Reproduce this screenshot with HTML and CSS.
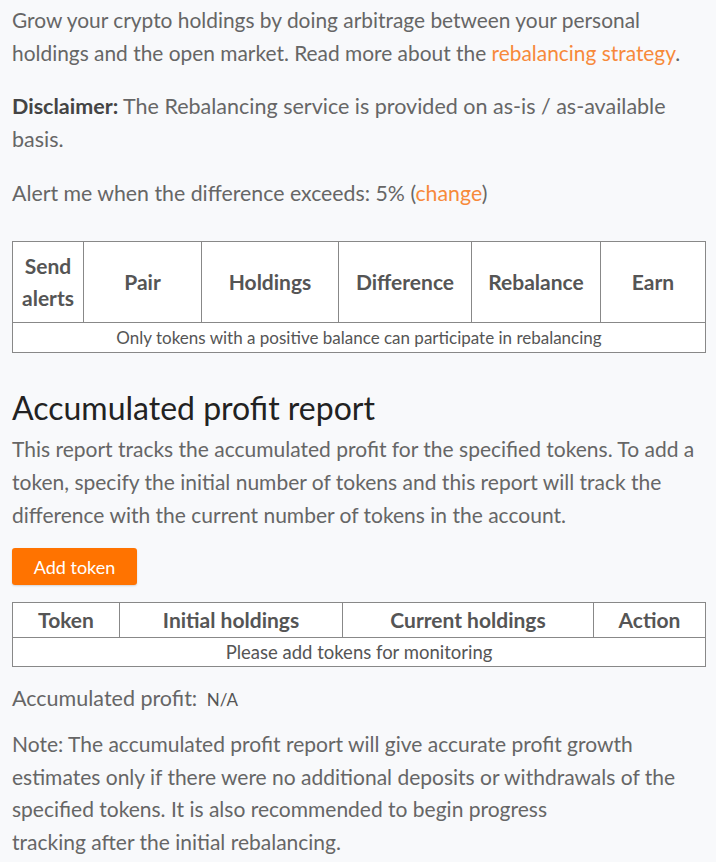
FILE: index.html
```html
<!DOCTYPE html>
<html>
<head>
<meta charset="utf-8">
<link rel="stylesheet" href="styles.css">
</head>
<body>
<div class="page">
  <p class="text intro">Grow your crypto holdings by doing arbitrage between your personal holdings and the open market. Read more about the <a class="link" href="#">rebalancing strategy</a>.</p>
  <p class="text disclaimer"><b class="strong">Disclaimer:</b> The Rebalancing service is provided on as-is / as-available basis.</p>
  <p class="text alert">Alert me when the difference exceeds: 5% (<a class="link" href="#">change</a>)</p>

  <table class="grid grid-main">
    <colgroup>
      <col style="width:71px"><col style="width:118px"><col style="width:137px"><col style="width:133px"><col style="width:129px"><col style="width:105px">
    </colgroup>
    <thead>
      <tr class="head-tall">
        <th>Send<br>alerts</th><th>Pair</th><th>Holdings</th><th>Difference</th><th>Rebalance</th><th>Earn</th>
      </tr>
    </thead>
    <tbody>
      <tr><td colspan="6" class="empty empty-main">Only tokens with a positive balance can participate in rebalancing</td></tr>
    </tbody>
  </table>

  <h2 class="title">Accumulated profit report</h2>
  <p class="text report">This report tracks the accumulated profit for the specified tokens. To add a token, specify the initial number of tokens and this report will track the difference with the current number of tokens in the account.</p>
  <button class="btn">Add token</button>

  <table class="grid grid-tokens">
    <colgroup>
      <col style="width:107px"><col style="width:223px"><col style="width:251px"><col style="width:112px">
    </colgroup>
    <thead>
      <tr class="head-short"><th>Token</th><th>Initial holdings</th><th>Current holdings</th><th>Action</th></tr>
    </thead>
    <tbody>
      <tr><td colspan="4" class="empty empty-tokens">Please add tokens for monitoring</td></tr>
    </tbody>
  </table>

  <p class="text profit">Accumulated profit: <span class="na">N/A</span></p>
  <p class="text note">Note: The accumulated profit report will give accurate profit growth estimates only if there were no additional deposits or withdrawals of the specified tokens. It is also recommended to begin progress<br>tracking after the initial rebalancing.</p>
</div>
</body>
</html>
```

FILE: styles.css
```css
html, body {
  margin: 0;
  padding: 0;
  background: #f8f9fb;
}
.page {
  padding: 3px 11px 0 12px;
  font-family: Lato, "Open Sans", sans-serif;
  color: #666;
}
.text {
  margin: 0 0 21px 0;
  font-size: 21px;
  line-height: 33px;
}
.intro {
  font-size: 20.9px;
}
.disclaimer {
  font-size: 21.5px;
}
.alert {
  font-size: 21.3px;
  margin-bottom: 31px;
}
.strong {
  color: #444;
  font-weight: 700;
}
.link {
  color: #f7893a;
  text-decoration: none;
}
.grid {
  width: 693px;
  border-collapse: collapse;
  table-layout: fixed;
  font-family: Lato, "Open Sans", sans-serif;
  color: #555;
  background: #fff;
}
.grid th, .grid td {
  border: 1.5px solid #888;
  text-align: center;
  padding: 0;
}
.grid th {
  font-size: 21px;
  font-weight: 700;
}
.head-tall th {
  height: 80px;
  line-height: 32px;
}
.head-short th {
  height: 34px;
  line-height: 24px;
}
.empty {
  height: 29px;
  line-height: 20px;
}
.empty-main {
  font-size: 17px;
}
.empty-tokens {
  font-size: 18.5px;
  height: 28px;
}
.grid-main {
  margin: 0 0 35px 0;
}
.title {
  margin: 0 0 4px 0;
  font-size: 32px;
  font-weight: 400;
  color: #222;
  line-height: 40px;
}
.report {
  margin-bottom: 17px;
}
.btn {
  display: block;
  width: 125px;
  height: 37px;
  border: none;
  border-radius: 3px;
  background: #ff7300;
  color: #fff;
  font-family: Lato, sans-serif;
  font-size: 18px;
  padding: 0;
  margin: 0 0 17px 0;
  box-shadow: 0 1px 2px rgba(0,0,0,0.15);
}
.grid-tokens {
  margin: 0 0 15px 0;
}
.profit {
  font-size: 21.5px;
  margin-bottom: 12px;
}
.note {
  line-height: 32.7px;
}
.na {
  font-size: 17px;
  color: #555;
  margin-left: 4px;
}
```
